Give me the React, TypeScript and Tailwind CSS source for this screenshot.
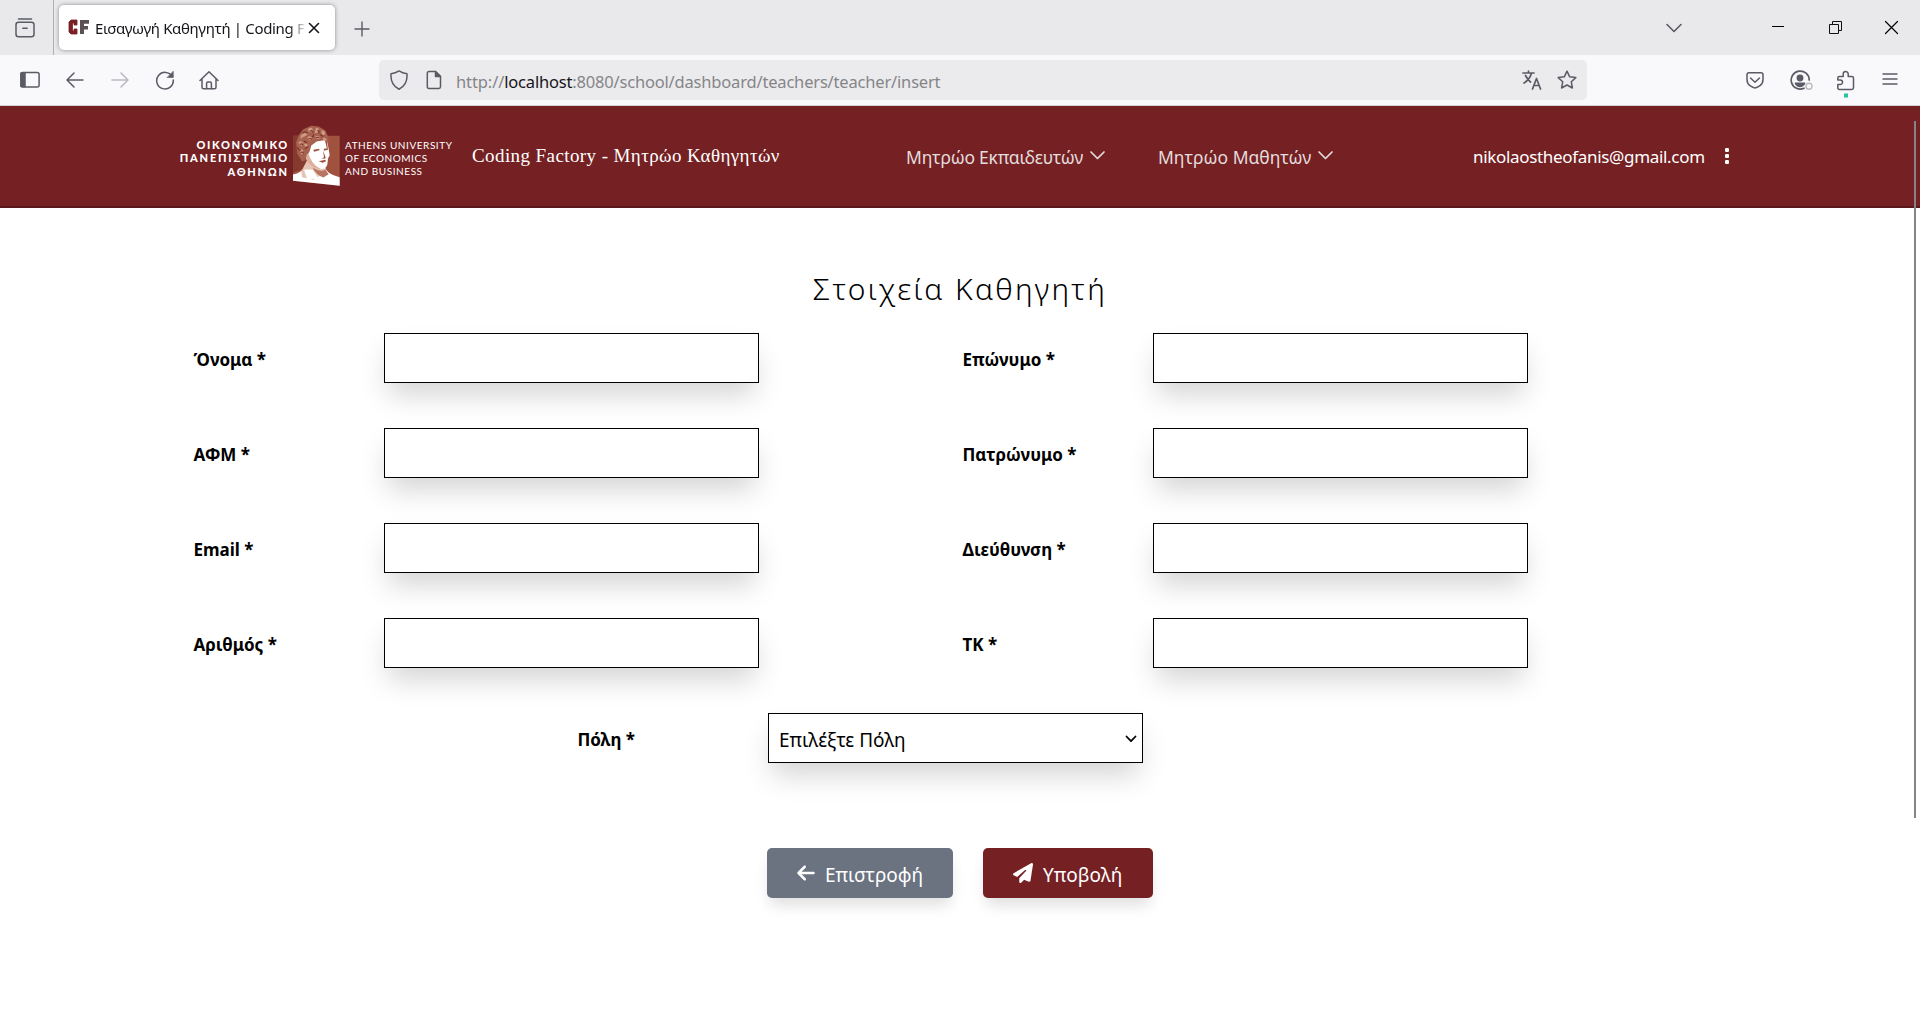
import type { ReactNode } from "react";
import { FaArrowLeft, FaPaperPlane } from "react-icons/fa6";

function Icon({ className, w = 20, h = 20, sw = 1.5, children }: { className?: string; w?: number; h?: number; sw?: number; children: ReactNode }) {
  return (
    <svg
      className={className}
      width={w}
      height={h}
      viewBox={`0 0 ${w} ${h}`}
      fill="none"
      stroke="currentColor"
      strokeWidth={sw}
      strokeLinecap="round"
      strokeLinejoin="round"
    >
      {children}
    </svg>
  );
}

function TabBar() {
  return (
    <div className="flex h-[55px] items-center bg-[#e9e9eb] text-[#5b5b66]">
      <div className="flex h-full w-[54px] items-center border-r border-[#b0b0b4] pl-[15px]">
        <Icon>
          <path d="M3.5 1h13" />
          <rect x="1" y="4.2" width="18" height="14.6" rx="2.5" />
          <path d="M7.8 10.2h4.4" />
        </Icon>
      </div>
      <div className="ml-[5px] flex h-[45px] w-[276px] items-center rounded-[5px] bg-white pl-[9px] shadow-[0_0_4px_rgba(0,0,0,0.4)]">
        <svg className="-mt-0.5 shrink-0" width="22" height="16" viewBox="0 0 22 16">
          <path d="M3 1h6v5H6V4H4.500v8H6v-2h3v5H3l-2-2V3z" fill="#7a1f24" stroke="#7a1f24" strokeWidth="0.8" />
          <path d="M12 1h9v3.700h-5v2.300h4v3.500h-4V15h-4z" fill="#5a5252" />
        </svg>
        <div className="ml-[5px] w-[210px] overflow-hidden pt-0.5 text-[15px] tracking-[-0.34px] whitespace-nowrap text-[#15141a] [mask-image:linear-gradient(to_right,black_194px,transparent_212px)]">
          Εισαγωγή Καθηγητή | Coding Fa
        </div>
        <Icon className="ml-[3px] shrink-0 text-[#15141a]" w={12} h={12} sw={1.6}>
          <path d="M1.500 1.500l9 9M10.500 1.500l-9 9" />
        </Icon>
      </div>
      <Icon className="ml-[19px] mt-0.5" w={16} h={16} sw={1.4}>
        <path d="M8 1v14M1 8h14" />
      </Icon>
      <Icon className="ml-auto" w={16} h={10} sw={1.6}>
        <path d="M1 1.500l7 7 7-7" />
      </Icon>
      <div className="-mt-0.5 ml-[90px] h-px w-3 bg-black" />
      <svg className="ml-[45px]" width="13" height="13" viewBox="0 0 13 13" fill="none" stroke="#111">
        <path d="M3.500 3V.5h9v9H10M.5 3.500h9v9h-9z" />
      </svg>
      <Icon className="mr-[21px] ml-[42px] text-black" w={15} h={15} sw={1.2}>
        <path d="M1.500 1.500l12 12M13.500 1.500l-12 12" />
      </Icon>
    </div>
  );
}

function Toolbar() {
  return (
    <div className="flex h-[51px] items-center border-b border-[#d5d3d8] bg-[#f9f9fb] pl-5 text-[#5b5b66]">
      <Icon>
        <rect x="0.900" y="2.500" width="18.200" height="14.500" rx="2" />
        <path d="M1 3h4v13.500H1z" fill="currentColor" />
      </Icon>
      <Icon className="ml-[25px]">
        <path d="M18 10H2M9 3l-7 7 7 7" />
      </Icon>
      <Icon className="ml-[25px] text-[#b9b9c0]">
        <path d="M2 10h16M11 3l7 7-7 7" />
      </Icon>
      <Icon className="ml-[25px]">
        <path d="M17.200 6.500A8.300 8.300 0 1 0 18.300 10" />
        <path d="M18.300 1.500v6h-6z" fill="currentColor" strokeWidth="0.600" />
      </Icon>
      <Icon className="ml-[24px]">
        <path d="M1 10.500l9-8.800 9 8.800M3 9v8.300q0 1.500 1.500 1.500h11q1.500 0 1.500-1.500V9" />
        <path d="M7.600 18.500v-5.300q0-1.300 1.300-1.300h2.200q1.300 0 1.300 1.300v5.300" />
      </Icon>
      <div className="ml-[160px] flex h-10 w-[1208px] items-center rounded-[5px] bg-[#ebebed] pl-[10px]">
        <Icon>
          <path d="M10 .9c2.500 1.700 4.800 2.500 8 2.800.5 7-1.500 12.500-8 15.500-6.500-3-8.500-8.500-8-15.500 3.200-.3 5.500-1.100 8-2.800z" />
        </Icon>
        <Icon className="ml-[15px]">
          <path d="M5 1.500h6.500l5 5v10.300q0 1.700-1.700 1.700H5q-1.700 0-1.700-1.700V3.200Q3.300 1.500 5 1.500z" />
          <path d="M11.500 1.500v5h5z" fill="currentColor" />
        </Icon>
        <div className="ml-3 pt-1 text-[16.500px] whitespace-nowrap text-[#858588]">
          <span className="tracking-[-0.1px]">http://</span>
          <span className="tracking-[-0.2px] text-[#15141a]">localhost</span>
          <span className="tracking-[-0.180px]">:8080/school/dashboard/teachers/teacher/insert</span>
        </div>
        <Icon className="ml-auto" sw={1.7}>
          <path d="M1 3h11M6.500 1v2M2 13c4-2.500 6.500-5.500 7.500-10M3.500 5.500c1.500 3 3 5 5 6.500" />
          <path d="M10.500 19l4-10.500 4 10.500M12 15.500h5" />
        </Icon>
        <Icon className="mr-[10px] ml-[15px]">
          <path d="M10 1.200l2.700 5.600 6.100.8-4.500 4.200 1.100 6.200-5.400-3-5.400 3 1.100-6.200L1.200 7.600l6.100-.8z" />
        </Icon>
      </div>
      <Icon className="ml-[158px]" w={20} h={20}>
        <path d="M4 2.800h12q2 0 2 2v4.700q0 4-3 6.200t-5 2.200-5-2.200-3-6.200V4.800q0-2 2-2z" />
        <path d="M5.500 8l4.500 4.200L14.500 8" />
      </Icon>
      <Icon className="ml-[25px]" w={24} h={20} sw={1.700}>
        <path d="M19.200 10A9 9 0 1 0 14 18.200" />
        <circle cx="10" cy="8" r="2.600" fill="currentColor" />
        <path d="M5.500 13.300h9q-1.500 3-4.500 3t-4.500-3z" fill="currentColor" />
        <circle cx="19" cy="16.300" r="3" stroke="#b9b9c0" strokeWidth="1.400" />
      </Icon>
      <Icon className="ml-[22px] mt-[7px]" w={20} h={28}>
        <path d="M3.500 6.500h3.700V4a2.500 2.500 0 0 1 5 0v2.500h3.600q1.700 0 1.700 1.700v9.600q0 1.700-1.700 1.700H3.500q-1.700 0-1.700-1.700v-3.300h2.500a2.200 2.200 0 0 0 0-4.500H1.800V8.200q0-1.700 1.700-1.700z" />
        <rect x="8" y="23.500" width="4" height="4" fill="#2ac3a2" stroke="none" />
      </Icon>
      <Icon className="-mt-0.5 ml-[26px]" w={16} h={14} sw={1.400}>
        <path d="M1 2h14M1 7h14M1 12h14" />
      </Icon>
    </div>
  );
}

function Bust() {
  return (
    <svg className="mx-[5px]" width="47" height="61" viewBox="369 76 141 182">
      <path d="M369 108H509V258L369 243z" fill="#a0523f" />
      <path d="M369 108h60v90l-60 20z" fill="#86392f" />
      <path d="M369 224q26-6 34-22l22-12 40 12q4 20 44 30v26L369 243z" fill="#fff" />
      <path d="M394 214l20-38 30 20 24 12-12 16-26 16-34-8z" fill="#e6c5b4" />
      <path d="M402 210q12-2 26 0l18 26-34 2z" fill="#fff" />
      <path d="M428 204q24 14 38 5l10 14-16 10q-20-6-32-29z" fill="#b97561" />
      <path d="M408 136q12-24 62-18l5 24 4 24-5 10-2 18q-4 14-20 14-20-2-36-24-14-20-8-48z" fill="#fff" />
      <path d="M402 140q10 10 18 34 12 26 34 34-20 2-36-16-22-24-16-52z" fill="#dcae9b" />
      <path d="M430 150l18-3v4l-16 5zM461 147l12-2v5l-11 3zM459 152l3 20-7 4 10 1 2-4zM446 184l20-4 2 4-10 5zM470 120l4 30-3-2-6-26z" fill="#9c5342" />
      <path d="M396 184l-14-22-4-34 8-22 14-18 24-10 22 2 20 12 8 18 2 18-14-7-22 4-16 12-6 20-8 8-4 17z" fill="#a7614f" />
      <path d="M392 108q8-11 16-8t-3 9q-9 2-13 9zM414 88q10-8 14 0t-5 9q-9-2-9-9zM438 84q10 0 8 9t-12 6zM454 92q10-2 11 7t-9 5zM385 128q9-8 14 1t-8 9zM412 112q10-7 14 2t-10 7zM436 110q10-6 13 2t-11 4zM458 115q7-4 11 3t-7 4zM389 150q10-5 11 4t-6 9zM402 134q6-7 10 0t-6 7z" fill="#d09c87" />
      <path d="M398 100q8-8 14 0M420 94q8-5 8 4M442 92q8 0 4 8M390 134q6-5 9 2M415 118q8-5 10 2M438 114q8-4 9 1M392 158q8-4 8 3M382 142q5 10 10 10M406 148q3-8 8-7M430 104q2 6-5 7M402 124q6 2 8 6M450 104q4 5 10 5" stroke="#7c3027" strokeWidth="3.500" fill="none" />
    </svg>
  );
}

function Chevron() {
  return (
    <Icon className="-mt-1" w={15} h={9} sw={1.700}>
      <path d="M1 1l6.500 6.500L14 1" />
    </Icon>
  );
}

function Header() {
  return (
    <header className="flex h-[102px] items-center border-b-2 border-[#5a181b] bg-[#752124] text-white">
      <div className="-mt-0.5 flex items-center pl-[178px]">
        <div className="w-[110px] pt-[6px] text-right font-['Lato'] text-[11px] leading-[13.300px] font-black whitespace-nowrap">
          <div className="mr-[-0.900px] tracking-[1.650px]">ΟΙΚΟΝΟΜΙΚΟ</div>
          <div className="mr-[-0.900px] tracking-[1.800px]">ΠΑΝΕΠΙΣΤΗΜΙΟ</div>
          <div className="mr-[-0.900px] tracking-[1.750px]">ΑΘΗΝΩΝ</div>
        </div>
        <Bust />
        <div className="w-[127px] pt-[6px] font-['Lato'] text-[10px] leading-[13px] tracking-[0.560px] whitespace-nowrap">
          <div>ATHENS UNIVERSITY</div>
          <div>OF ECONOMICS</div>
          <div>AND BUSINESS</div>
        </div>
      </div>
      <div className="w-[434px] font-['Liberation_Serif'] text-[19px] tracking-[0.410px] whitespace-nowrap">
        Coding Factory - Μητρώο Καθηγητών
      </div>
      <nav className="flex items-center pt-0.5 text-[17.500px] whitespace-nowrap text-[#e3dcdc]">
        <a className="flex w-[252px] items-center gap-[7px]">
          <span className="tracking-[-0.230px]">Μητρώο Εκπαιδευτών</span>
          <Chevron />
        </a>
        <a className="flex w-[315px] items-center gap-[7px]">
          <span>Μητρώο Μαθητών</span>
          <Chevron />
        </a>
      </nav>
      <div className="flex items-center pt-0.5">
        <span className="text-[17px] tracking-[-0.320px]">nikolaostheofanis@gmail.com</span>
        <svg className="-mt-0.5 ml-5" width="4" height="16" viewBox="0 0 4 16" fill="#fff">
          <rect width="4" height="4" rx="1.200" />
          <rect y="6" width="4" height="4" rx="1.200" />
          <rect y="12" width="4" height="4" rx="1.200" />
        </svg>
      </div>
    </header>
  );
}

const boxClass = "h-[50px] w-[375px] shrink-0 border border-black bg-white shadow-[0_16px_28px_-4px_rgba(0,0,0,0.17)]";

function Field({ label, children }: { label: string; children?: ReactNode }) {
  return (
    <div className="flex items-center">
      <label className="w-48 shrink-0 pt-1 pl-[1.500px] text-[17px] font-bold">{label}</label>
      {children ?? <input className={boxClass} />}
    </div>
  );
}

const fields = ["Όνομα *", "Επώνυμο *", "ΑΦΜ *", "Πατρώνυμο *", "Email *", "Διεύθυνση *", "Αριθμός *", "ΤΚ *"];

export default function App() {
  return (
    <div className="relative h-[1020px] w-[1920px] overflow-hidden bg-white font-['Noto_Sans',sans-serif] text-black">
      <TabBar />
      <Toolbar />
      <Header />
      <main className="flex flex-col">
        <h1 className="mt-[61px] h-[64px] text-center text-[30px] leading-[40px] font-light tracking-[2.300px]">Στοιχεία Καθηγητή</h1>
        <div className="grid grid-cols-[769px_769px] gap-y-[45px] pl-48">
          {fields.map((f) => (
            <Field key={f} label={f} />
          ))}
        </div>
        <div className="mt-[45px] pl-[576px]">
          <Field label="Πόλη *">
            <div className={`${boxClass} flex items-center justify-between pr-[5px] pl-[10px] text-[19px]`}>
              <span className="pt-1">Επιλέξτε Πόλη</span>
              <Icon className="mt-0.5" w={12} h={8} sw={1.800}>
                <path d="M1.500 1.500L6 6.200l4.500-4.700" />
              </Icon>
            </div>
          </Field>
        </div>
        <div className="mt-[85px] flex justify-center gap-[30px] text-[19px] text-white">
          <button className="flex h-[50px] w-[186px] items-center rounded-[5px] bg-[#6b7280] pl-[30px] shadow-[0_10px_15px_-3px_rgba(0,0,0,0.13)]">
            <FaArrowLeft size={20} className="w-[18px]" />
            <span className="ml-[10px] pt-1">Επιστροφή</span>
          </button>
          <button className="flex h-[50px] w-[170px] items-center rounded-[5px] bg-[#752124] pl-[30px] shadow-[0_10px_15px_-3px_rgba(0,0,0,0.13)]">
            <FaPaperPlane size={20} />
            <span className="ml-[10px] pt-1 tracking-[0.100px]">Υποβολή</span>
          </button>
        </div>
      </main>
      <div className="absolute top-[121px] right-[4px] h-[697px] w-[2px] bg-[#858585]" />
    </div>
  );
}
